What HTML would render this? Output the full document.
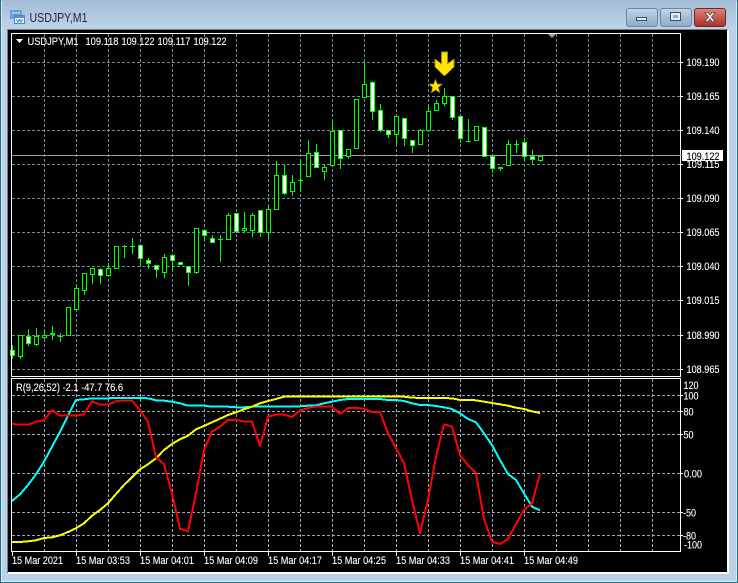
<!DOCTYPE html>
<html><head><meta charset="utf-8"><style>
html,body{margin:0;padding:0;background:#b9d2e8;width:738px;height:583px;overflow:hidden}
svg{display:block}
text{font-family:"Liberation Sans",sans-serif;font-size:11.4px;fill:#fff;stroke:#fff;stroke-width:.12px}
.c{shape-rendering:crispEdges}
</style></head><body>
<svg width="738" height="583" viewBox="0 0 738 583" xmlns="http://www.w3.org/2000/svg">
<defs><linearGradient id="tb" x1="0" y1="0" x2="0" y2="1"><stop offset="0" stop-color="#a3bcd6"/><stop offset="1" stop-color="#bed4e8"/></linearGradient>
<linearGradient id="cl" x1="0" y1="0" x2="0" y2="1"><stop offset="0" stop-color="#d98a80"/><stop offset=".5" stop-color="#c9584e"/><stop offset="1" stop-color="#a83226"/></linearGradient>
<linearGradient id="bt" x1="0" y1="0" x2="0" y2="1"><stop offset="0" stop-color="#c4d6e8"/><stop offset=".5" stop-color="#a5bdd6"/><stop offset="1" stop-color="#8facc9"/></linearGradient></defs>
<rect width="738" height="583" fill="#b9d2e8"/>
<rect width="738" height="30" fill="url(#tb)"/>
<g class="c" fill="none">
<path d="M0.5 0V582.5H737.5V0" stroke="#1f6f86"/>
<path d="M1.5 1V581.5H736.5V1" stroke="#dfeaf4"/>
<rect x="7" y="29" width="721" height="1" fill="#6d7d8d"/>
<rect x="7" y="29" width="1" height="544" fill="#6d7d8d"/>
<rect x="8" y="30" width="719" height="542" fill="#000"/>
<rect x="8" y="572" width="720" height="2" fill="#fff"/>
<rect x="727" y="30" width="2" height="544" fill="#fff"/>
</g>
<!-- icon -->
<g class="c">
<rect x="10.500" y="10.500" width="11" height="8" fill="#6f9fd8" stroke="#6f9fd8"/>
<rect x="14.500" y="15.500" width="10" height="8" fill="#e8f1fb" stroke="#4b82c8"/>
<rect x="15" y="16" width="9" height="2" fill="#5a90d4"/>
<path d="M12 13h8" stroke="#fff" stroke-dasharray="2 1"/>
<path d="M16.500 19.500l1.500 2.500 1.500-2.500 1.500 2.500 1.500-2.500" stroke="#3f78c0" fill="none"/>
</g>
<text x="29.500" y="22" style="font-size:12.6px;fill:#2a2448;stroke:none" textLength="58" lengthAdjust="spacingAndGlyphs">USDJPY,M1</text>
<!-- window buttons -->
<rect x="626.500" y="8.500" width="31" height="18" rx="2.500" fill="url(#bt)" stroke="#6c87a5"/>
<rect x="660.500" y="8.500" width="31" height="18" rx="2.500" fill="url(#bt)" stroke="#6c87a5"/>
<rect x="694.500" y="8.500" width="31" height="18" rx="2.500" fill="url(#cl)" stroke="#6e2a2a"/>
<rect x="636.500" y="17.500" width="10" height="3" fill="#e8eef5" stroke="#41505f"/>
<rect x="670.500" y="12.500" width="10" height="8" fill="#e8eef5" stroke="#41505f"/>
<rect x="673" y="15" width="5" height="3" fill="#8facc9"/>
<path d="M705 12.500h3l2 2.500 2-2.500h3l-3.500 4.500 3.500 4.500h-3l-2-2.500-2 2.500h-3l3.500-4.500z" fill="#f2f2f2" stroke="#5a4a4a" stroke-width=".8"/>
<!-- grid main -->
<g class="c" fill="none" stroke="#778899" stroke-dasharray="3 2">
<path d="M12 62.500H680M12 96.500H680M12 130.500H680M12 164.500H680M12 198.500H680M12 232.500H680M12 266.500H680M12 300.500H680M12 335.500H680M12 369.500H680"/>
<path d="M44.500 34V376M76.500 34V376M108.500 34V376M140.500 34V376M172.500 34V376M204.500 34V376M236.500 34V376M268.500 34V376M300.500 34V376M332.500 34V376M364.500 34V376M396.500 34V376M428.500 34V376M460.500 34V376M492.500 34V376M524.500 34V376M556.500 34V376M588.500 34V376M620.500 34V376M652.500 34V376"/>
</g>
<path class="c" d="M12 155.500H680" stroke="#9a9a9a" fill="none"/>
<!-- wicks -->
<path class="c" fill="none" stroke="#0f0" d="M12.500 345V359M20.500 335V359M28.500 329V346M36.500 328V346M44.500 330V339M52.500 326V340M60.500 333V342M76.500 284V310M84.500 273V295M92.500 268V284M100.500 268V284M108.500 263V277M124.500 245V258M132.500 238V254M140.500 245V266M148.500 258V269M156.500 265V278M164.500 254V278M172.500 254V270M188.500 266V286M196.500 228V274M204.500 229V241M212.500 235V243M220.500 235V262M228.500 213V240M236.500 213V233M244.500 212V233M252.500 213V237M260.500 210V237M268.500 206V239M276.500 161V210M284.500 165V195M292.500 175V196M300.500 159V192M308.500 140V177M316.500 144V168M324.500 165V180M332.500 119V167M340.500 130V169M348.500 149V159M364.500 62V98M372.500 81V120M380.500 104V132M388.500 130V138M396.500 116V145M404.500 118V146M412.500 140V153M420.500 129V145M428.500 105V131M436.500 100V111M444.500 88V106M452.500 96V120M460.500 116V143M468.500 119V142M492.500 156V173M500.500 167V171M508.500 140V166M516.500 140V153M524.500 138V162M532.500 150V165M540.500 156V162"/>
<!-- doji -->
<path class="c" fill="none" stroke="#0f0" d="M58 336.500h5M122 246.500h5M130 246.500h5M218 239.500h5M298 180.500h5M466 141.500h5M514 144.500h5"/>
<!-- bullish (black) bodies -->
<path class="c" fill="#000" stroke="#0f0" d="M18.500 335.500h4V356.500h-4zM34.500 336.500h4V344.500h-4zM42.500 335.500h4V337.500h-4zM66.500 307.500h4V335.500h-4zM74.500 288.500h4V309.500h-4zM82.500 273.500h4V290.500h-4zM90.500 268.500h4V274.500h-4zM106.500 268.500h4V275.500h-4zM114.500 246.500h4V268.500h-4zM162.500 257.500h4V272.500h-4zM194.500 228.500h4V272.500h-4zM226.500 215.500h4V239.500h-4zM242.500 228.500h4V230.500h-4zM250.500 215.500h4V230.500h-4zM266.500 209.500h4V232.500h-4zM274.500 175.500h4V209.500h-4zM290.500 182.500h4V191.500h-4zM306.500 153.500h4V176.500h-4zM322.500 167.500h4V171.500h-4zM330.500 131.500h4V165.500h-4zM346.500 149.500h4V156.500h-4zM354.500 99.500h4V148.500h-4zM362.500 84.500h4V97.500h-4zM394.500 116.500h4V134.500h-4zM418.500 130.500h4V144.500h-4zM426.500 111.500h4V130.500h-4zM434.500 103.500h4V110.500h-4zM442.500 96.500h4V103.500h-4zM474.500 126.500h4V140.500h-4zM506.500 144.500h4V165.500h-4zM538.500 156.500h4V160.500h-4z"/>
<!-- bearish (white) bodies -->
<path class="c" fill="#fff" stroke="#0f0" d="M10.500 350.500h4V355.500h-4zM26.500 336.500h4V343.500h-4zM50.500 333.500h4V334.500h-4zM98.500 269.500h4V275.500h-4zM138.500 245.500h4V258.500h-4zM146.500 260.500h4V263.500h-4zM154.500 265.500h4V269.500h-4zM170.500 255.500h4V260.500h-4zM178.500 262.500h4V264.500h-4zM186.500 266.500h4V272.500h-4zM202.500 230.500h4V235.500h-4zM210.500 238.500h4V242.500h-4zM234.500 213.500h4V231.500h-4zM258.500 210.500h4V232.500h-4zM282.500 175.500h4V193.500h-4zM314.500 152.500h4V167.500h-4zM338.500 130.500h4V158.500h-4zM370.500 82.500h4V111.500h-4zM378.500 110.500h4V130.500h-4zM386.500 130.500h4V134.500h-4zM402.500 118.500h4V138.500h-4zM410.500 140.500h4V145.500h-4zM450.500 96.500h4V117.500h-4zM458.500 116.500h4V138.500h-4zM482.500 127.500h4V156.500h-4zM490.500 156.500h4V168.500h-4zM498.500 167.500h4V168.500h-4zM522.500 142.500h4V156.500h-4zM530.500 156.500h4V159.500h-4z"/>
<!-- arrow + star -->
<path class="c" d="M441.500 52H447.500V64L454 59V67L444.500 76L435 67V59L441.500 64z" fill="#ffe600" stroke="#a88a00" stroke-width=".6"/>
<path d="M435.500 79l2 5h5l-4 3.500 1.500 5.500-4.500-3-4.500 3 1.500-5.500-4-3.500h5z" fill="#ffe600" stroke="#7a5a10" stroke-width=".7"/>
<path d="M547 33h10l-5 5z" fill="#8fa3b5"/>
<!-- frames -->
<g class="c" fill="none" stroke="#fff">
<rect x="11.500" y="33.500" width="669" height="343"/>
<rect x="11.500" y="378.500" width="669" height="173"/>
<path d="M680 62.500h3M680 96.500h3M680 130.500h3M680 164.500h3M680 198.500h3M680 232.500h3M680 266.500h3M680 300.500h3M680 335.500h3M680 369.500h3M680 395.500h3M680 411.500h3M680 434.500h3M680 473.500h3M680 512.500h3M680 535.500h3M12.500 552V556M76.500 552V556M140.500 552V556M204.500 552V556M268.500 552V556M332.500 552V556M396.500 552V556M460.500 552V556M524.500 552V556"/>
</g>
<path d="M16 39h7l-3.500 4z" fill="#fff"/>
<text x="27.500" y="45" textLength="51" lengthAdjust="spacingAndGlyphs">USDJPY,M1</text>
<text x="85.500" y="45" textLength="33" lengthAdjust="spacingAndGlyphs">109.118</text>
<text x="121.500" y="45" textLength="33" lengthAdjust="spacingAndGlyphs">109.122</text>
<text x="157.500" y="45" textLength="33" lengthAdjust="spacingAndGlyphs">109.117</text>
<text x="193.500" y="45" textLength="33" lengthAdjust="spacingAndGlyphs">109.122</text>
<!-- price labels -->
<g>
<text x="686.500" y="66" textLength="33" lengthAdjust="spacingAndGlyphs">109.190</text>
<text x="686.500" y="100" textLength="33" lengthAdjust="spacingAndGlyphs">109.165</text>
<text x="686.500" y="134" textLength="33" lengthAdjust="spacingAndGlyphs">109.140</text>
<text x="686.500" y="168" textLength="33" lengthAdjust="spacingAndGlyphs">109.115</text>
<text x="686.500" y="202" textLength="33" lengthAdjust="spacingAndGlyphs">109.090</text>
<text x="686.500" y="236" textLength="33" lengthAdjust="spacingAndGlyphs">109.065</text>
<text x="686.500" y="270" textLength="33" lengthAdjust="spacingAndGlyphs">109.040</text>
<text x="686.500" y="304" textLength="33" lengthAdjust="spacingAndGlyphs">109.015</text>
<text x="686.500" y="339" textLength="33" lengthAdjust="spacingAndGlyphs">108.990</text>
<text x="686.500" y="373" textLength="33" lengthAdjust="spacingAndGlyphs">108.965</text>
</g>
<rect class="c" x="682" y="150" width="41" height="11" fill="#fff"/>
<path class="c" d="M680 155.500h3" stroke="#9a9a9a"/>
<text x="686.500" y="160" style="fill:#000;stroke:#000" textLength="33" lengthAdjust="spacingAndGlyphs">109.122</text>
<!-- sub grid -->
<g class="c" fill="none" stroke="#9aa6b2" stroke-dasharray="3 2">
<path d="M12 395.500H680M12 411.500H680M12 434.500H680M12 473.500H680M12 512.500H680M12 535.500H680"/>
<path d="M44.500 379V551M76.500 379V551M108.500 379V551M140.500 379V551M172.500 379V551M204.500 379V551M236.500 379V551M268.500 379V551M300.500 379V551M332.500 379V551M364.500 379V551M396.500 379V551M428.500 379V551M460.500 379V551M492.500 379V551M524.500 379V551M556.500 379V551M588.500 379V551M620.500 379V551M652.500 379V551"/>
</g>
<!-- indicator lines -->
<g class="c" fill="none" stroke-width="2" stroke-linejoin="round">
<polyline stroke="#0ff" points="12,501 20,494.300 28,485 36,474.300 44,461.700 52,446.700 60,431.700 68,415.700 76,400 84,399.300 92,398.300 100,398.300 108,398.300 116,398 124,398 132,398 140,398 148,398.300 156,400.300 164,400.700 172,401.700 180,403.300 188,405.700 196,405.700 204,405.700 212,406.700 220,406.700 228,406.700 236,407.300 244,407.300 252,406.700 260,406.700 268,406.700 276,406.700 284,406.700 292,406.700 300,406.300 308,405.700 316,405.300 324,403.300 332,401.700 340,400 348,399 356,399 364,399 372,399 380,399 388,400 396,400 404,401 412,403.300 420,405 428,405 436,406 444,407.300 452,409 460,413.300 468,419 476,422.300 484,433.300 492,445 500,460 508,474 516,480 524,493.300 532,506.700 540,510.300"/>
<polyline stroke="#ff0" points="12,542 20,542 28,541.300 36,540.300 44,538 52,537.300 60,535.300 68,532 76,528.300 84,523.300 92,515.700 100,510 108,503.300 116,494 124,485 132,477.300 140,469.300 148,464.300 156,458.300 164,450 172,444 180,439.300 188,435.700 196,429.300 204,426 212,422.300 220,418.700 228,415 236,412.300 244,409.300 252,406.700 260,403.300 268,401 276,399 284,396.700 292,396.300 404,396.700 412,397.700 452,398.300 460,400 468,400 476,400.300 484,401.700 492,403 500,404.300 508,405.700 516,407.700 524,409 532,411.300 540,413"/>
<polyline stroke="#f00" points="12,424 20,424.700 28,424.700 36,421.700 44,420.300 52,410 60,415.700 68,415.700 76,415.700 84,414.300 92,401.300 100,404.700 108,404.700 116,401.300 124,400.300 132,400.300 140,410.300 148,421.700 156,457.300 164,464.300 172,493.300 180,528.700 188,531.300 196,493.300 204,450 212,431.700 220,426.700 228,420 236,419.700 244,421.700 252,421.700 260,446 268,416.700 276,414.700 284,414.700 292,417 300,410.700 308,408 316,406.700 324,406.700 332,406.700 340,414 348,408 356,408 364,408.700 372,412 380,412 388,433.300 396,448.300 404,463.300 412,500 420,533.300 428,500 436,456.700 444,424.300 452,426.700 460,455.300 468,465 476,473.300 484,519 492,541.700 500,544 508,539 516,524 524,510 532,503.300 540,474"/>
</g>
<text x="16" y="391" textLength="107" lengthAdjust="spacingAndGlyphs">R(9,26,52) -2.1 -47.7 76.6</text>
<!-- sub labels -->
<text x="683.500" y="389" textLength="15" lengthAdjust="spacingAndGlyphs">120</text>
<text x="683.500" y="399.500" textLength="15" lengthAdjust="spacingAndGlyphs">100</text>
<text x="683.500" y="415.500" textLength="10" lengthAdjust="spacingAndGlyphs">80</text>
<text x="683.500" y="438.500" textLength="10" lengthAdjust="spacingAndGlyphs">50</text>
<text x="684" y="477.500" textLength="18" lengthAdjust="spacingAndGlyphs">0.00</text>
<text x="683" y="516.500" textLength="13" lengthAdjust="spacingAndGlyphs">-50</text>
<text x="683" y="539.500" textLength="13" lengthAdjust="spacingAndGlyphs">-80</text>
<text x="684" y="548.500" textLength="18" lengthAdjust="spacingAndGlyphs">-100</text>
<!-- time labels -->
<text x="12" y="564" textLength="51" lengthAdjust="spacingAndGlyphs">15 Mar 2021</text>
<text x="76" y="564" textLength="54" lengthAdjust="spacingAndGlyphs">15 Mar 03:53</text>
<text x="140" y="564" textLength="54" lengthAdjust="spacingAndGlyphs">15 Mar 04:01</text>
<text x="204" y="564" textLength="54" lengthAdjust="spacingAndGlyphs">15 Mar 04:09</text>
<text x="268" y="564" textLength="54" lengthAdjust="spacingAndGlyphs">15 Mar 04:17</text>
<text x="332" y="564" textLength="54" lengthAdjust="spacingAndGlyphs">15 Mar 04:25</text>
<text x="396" y="564" textLength="54" lengthAdjust="spacingAndGlyphs">15 Mar 04:33</text>
<text x="460" y="564" textLength="54" lengthAdjust="spacingAndGlyphs">15 Mar 04:41</text>
<text x="524" y="564" textLength="54" lengthAdjust="spacingAndGlyphs">15 Mar 04:49</text>
</svg>
</body></html>
